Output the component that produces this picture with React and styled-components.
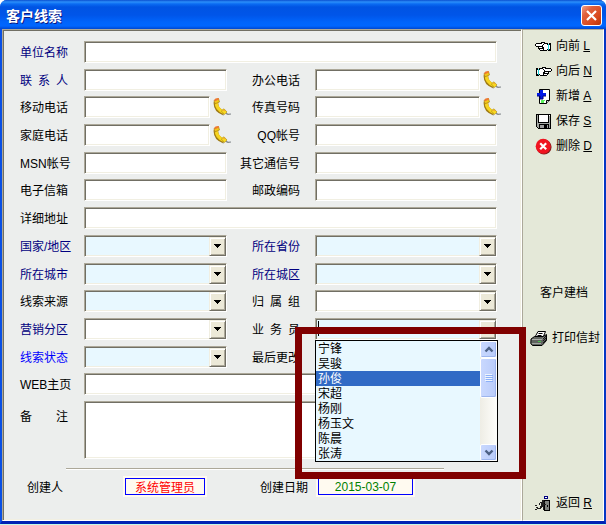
import React from 'react';
import styled, { createGlobalStyle, css } from 'styled-components';

const GlobalStyle = createGlobalStyle`
  * { box-sizing: border-box; }
  body {
    margin: 0;
    background: #fff;
    color: #000;
    font: 12px/15px "Liberation Sans", "Noto Sans CJK SC", sans-serif;
  }
  button, input, select, textarea { font: inherit; color: inherit; }
`;

const sunken = css`
  border: 1px solid;
  border-color: #aca899 #fff #fff #aca899;
  border-radius: 0;
  box-shadow: inset 1px 1px #716f64, inset -1px -1px #f1efe2;
`;

const Page = styled.div`
  display: flex;
  flex-direction: column;
  min-height: 100vh;
`;

const Desktop = styled.div`
  height: 1px;
  background: #c4fbe6;
`;

const Window = styled.main`
  flex: 1;
  display: flex;
  flex-direction: column;
  border: solid #0a50e4;
  border-width: 0 2px 3px;
  border-color: #0a50e4 #0636c4 #0022b4 #0a50e4;
  border-radius: 7px 7px 0 0;
  background: #0a50e4;
`;

const TitleBar = styled.header`
  display: flex;
  align-items: center;
  justify-content: space-between;
  height: 29px;
  margin: 0 -2px;
  padding: 2px 4px 0 6px;
  border-radius: 7px 7px 0 0;
  background: linear-gradient(
    #0a50d0 0, #2b8ffa 2px, #0a6bf2 4px, #0054e3 7px, #0055e9 15px,
    #0064fb 22px, #0066ff 26px, #0047cf 29px
  );
`;

const Title = styled.h1`
  margin: 0;
  color: #fff;
  font-size: 14px;
  line-height: 20px;
  font-weight: 700;
  text-shadow: 1px 1px #0a1883;
`;

const CloseButton = styled.button`
  display: grid;
  place-items: center;
  width: 21px;
  height: 21px;
  padding: 0;
  border: 1px solid #fff;
  border-radius: 3px;
  background: linear-gradient(135deg, #f0a088 0, #e0603c 30%, #d8481c 70%, #b83408 100%);
`;

const Body = styled.div`
  flex: 1;
  display: grid;
  grid-template-columns: minmax(0, 1fr) 82px;
`;

const Form = styled.form`
  ${sunken}
  padding: 11px 20px 20px 17px;
  background: #eceeed;
`;

const Fields = styled.div`
  display: grid;
  grid-template-columns: 64px minmax(0, 147fr) 84px minmax(0, 186fr);
  grid-template-rows: repeat(13, 1fr);
  min-height: 360px;
`;

const toneColor = { navy: '#000080', blue: '#0000ff', black: '#000' };

const Label = styled.label`
  justify-self: ${p => (p.$end ? 'end' : 'start')};
  width: ${p => (p.$spread ? '48px' : 'auto')};
  margin-right: ${p => (p.$end ? '15px' : '0')};
  color: ${p => toneColor[p.$tone || 'black']};
  line-height: 24px;
  white-space: nowrap;
  text-align-last: ${p => (p.$spread ? 'justify' : 'auto')};
`;

const Cell = styled.div`
  position: relative;
  display: flex;
  align-items: flex-start;
  gap: 3px;
  grid-column: ${p => (p.$wide ? 'span 3' : 'auto')};
  padding-right: ${p => (p.$phone ? '0' : '4px')};
`;

const TextBox = styled.input`
  ${sunken}
  flex: 1;
  min-width: 0;
  height: 22px;
  padding: 2px 4px;
  background: #fff;
  outline: none;
`;

const IconButton = styled.button`
  display: block;
  width: 18px;
  height: 20px;
  padding: 0;
  border: 0;
  background: none;
`;

const Combo = styled.div`
  ${sunken}
  position: relative;
  flex: 1;
  display: flex;
  min-width: 0;
  height: 22px;
  padding: 1px;
  background: ${p => (p.$plain ? '#fff' : '#e8f8ff')};
`;

const comboField = css`
  appearance: none;
  flex: 1;
  min-width: 0;
  padding: 0 20px 0 2px;
  border: 0;
  background: transparent;
  outline: none;
`;

const Select = styled.select`${comboField}`;
const ComboInput = styled.input`${comboField}`;

const ComboArrow = styled.span`
  position: absolute;
  top: 1px;
  right: 0;
  bottom: 0;
  display: grid;
  place-items: center;
  width: 17px;
  border: 1px solid;
  border-color: #f1efe2 #716f64 #716f64 #f1efe2;
  box-shadow: inset 1px 1px #fff, inset -1px -1px #aca899;
  background: #ece9d8;
  pointer-events: none;
`;

const Caret = styled.span`
  position: absolute;
  top: 2px;
  left: 2px;
  width: 1px;
  height: 15px;
  background: #000;
`;

const Highlight = styled.div`
  position: absolute;
  z-index: 3;
  top: 9px;
  left: -20px;
  right: -25px;
  height: 152px;
  border: 7px solid #800000;
  pointer-events: none;
`;

const Popup = styled.div`
  position: absolute;
  z-index: 2;
  top: 22px;
  left: 0;
  right: 3px;
  display: flex;
  border: 1px solid #000;
  background: #e8f8ff;
`;

const Options = styled.ul`
  flex: 1;
  margin: 0;
  padding: 0;
  list-style: none;
`;

const Option = styled.li`
  height: 15px;
  padding-left: 2px;
  line-height: 17px;
  color: ${p => (p.$selected ? '#fff' : '#000')};
  background: ${p => (p.$selected ? '#316ac5' : 'transparent')};
`;

const ScrollBar = styled.div`
  display: flex;
  flex-direction: column;
  width: 17px;
  background: linear-gradient(90deg, #eeede5, #fefefb);
`;

const scrollPart = css`
  display: grid;
  place-items: center;
  padding: 0;
  border: 1px solid #fff;
  border-radius: 2px;
  background: linear-gradient(90deg, #c9d8fe, #b9cbfa);
  box-shadow: inset -1px -1px #9db5ee;
`;

const ScrollButton = styled.button`
  ${scrollPart}
  height: 17px;
  margin-top: ${p => (p.$last ? 'auto' : '0')};
`;

const ScrollThumb = styled.div`
  ${scrollPart}
  height: 40px;
`;

const Notes = styled.div`
  display: grid;
  grid-template-columns: 64px minmax(0, 1fr);
  padding-right: 4px;

  label { margin-top: 4px; }
`;

const TextArea = styled.textarea`
  ${sunken}
  display: block;
  width: 100%;
  height: 58px;
  background: #fff;
  resize: none;
  outline: none;
`;

const Rule = styled.hr`
  height: 2px;
  margin: 9px 57px 6px 46px;
  border: 0;
  border-top: 1px solid #aca899;
  background: #fff;
`;

const Meta = styled.div`
  display: grid;
  grid-template-columns: 96px 84px 1fr 56px 99px;
  padding: 0 86px 0 7px;

  label:nth-of-type(2) { grid-column: 4; }
`;

const Stamp = styled.input`
  min-width: 0;
  height: 21px;
  padding: 0;
  border: 2px solid #fffaf0;
  background: #fffaf0;
  box-shadow: inset 0 0 0 1px #0000ff;
  color: ${p => p.$color};
  text-align: center;
  outline: none;
`;

const Sidebar = styled.nav`
  display: flex;
  flex-direction: column;
  padding: 4px 0;
  border: 1px solid;
  border-color: #aca899 #fff #fff #aca899;
  background: #e4e8d8;
`;

const Action = styled.button`
  display: flex;
  align-items: center;
  gap: 4px;
  height: 25px;
  margin-top: ${p => p.$before || '0'};
  padding: 0 0 0 ${p => p.$inset || '12px'};
  border: 0;
  background: none;
  white-space: nowrap;
`;

const palette = { '#': '#000', w: '#fff', c: '#20d8e0', g: '#808480' };

const PixelIcon = ({ rows, flip }) => {
  const width = rows[0].length;
  return (
    <svg
      width={width}
      height={rows.length}
      viewBox={`0 0 ${width} ${rows.length}`}
      shapeRendering="crispEdges"
      aria-hidden="true"
    >
      {rows.flatMap((row, y) =>
        [...row].map((key, x) =>
          palette[key] ? (
            <rect key={`${x}-${y}`} x={flip ? width - 1 - x : x} y={y} width="1" height="1" fill={palette[key]} />
          ) : null
        )
      )}
    </svg>
  );
};

const handRows = [
  '......####.......',
  '.######ww####.##.',
  '#wwwwwww#www#c##.',
  '#wwwwww#wwwwwcw#.',
  '.#######wwwwwcw#.',
  '...#www##wwwwcw#.',
  '...######wwwwcw#.',
  '....#www#www#c##.',
  '.....#######.###.',
];

const Phone = () => (
  <svg width="18" height="20" viewBox="0 0 18 20" aria-hidden="true">
    <path d="M3 9 C4 13 7 17 11 19" fill="none" stroke="#a0a4a4" strokeWidth="2" opacity=".5" />
    <path d="M3 6 C2.5 11 5 15 11 17" fill="none" stroke="#a07c14" strokeWidth="4.6" />
    <path d="M3.3 6 C3.2 11 6 14.5 11 16.5" fill="none" stroke="#f6d420" strokeWidth="3.2" />
    <path d="M1 4.5 L5.5 2.5 L6.5 6 L2 7.8Z" fill="#f2c818" stroke="#a88018" strokeWidth=".7" />
    <path d="M1.2 4 L2.5 2.4 L5.5 2 L6 3.6 L2 5.2Z" fill="#f07830" />
    <path d="M8.3 15 L11 12.8 L14 16 L11.5 18.4Z" fill="#f8dc20" stroke="#b89018" strokeWidth=".7" />
    <path d="M10 14.5 L11 13.4 L12.4 15.4Z" fill="#f89838" />
    <path d="M13 17.4 L15 18.4 L18 18" fill="none" stroke="#808488" strokeWidth="1.2" />
  </svg>
);

const NewPage = () => (
  <svg width="17" height="17" viewBox="0 0 17 17" aria-hidden="true">
    <path d="M4.5 1.5h10v11l-3 3h-7z" fill="#fff" stroke="#000" />
    <path d="M14.5 12.5h-3v3" fill="#d8d8d8" stroke="#000" />
    <path d="M5 2h3v3h3v3H8v3H5V8H2V5h3z" fill="#0018e8" />
    <path d="M2 8h3v3h3v-3h3" fill="none" stroke="#000080" />
    <path d="M6 12h4v1H6zM6 13h3v2H6z" fill="#5cf05c" />
  </svg>
);

const Floppy = () => (
  <svg width="17" height="17" viewBox="0 0 17 17" shapeRendering="crispEdges" aria-hidden="true">
    <path d="M1 1h15v15H3l-2-2z" fill="#000" />
    <path d="M2 2h13v13H3l-1-1z" fill="#a4a8a4" />
    <path d="M3 1h11v9H3z" fill="#000" />
    <path d="M4 2h9v7H4z" fill="#fff" />
    <path d="M4 11h10v5H4z" fill="#000" />
    <path d="M5 12h4v3H5zM12 12h1v3h-1z" fill="#a0a0a0" />
    <path d="M14 2h1v1h-1z" fill="#fff" />
  </svg>
);

const Delete = () => (
  <svg width="17" height="17" viewBox="0 0 17 17" aria-hidden="true">
    <circle cx="9" cy="9" r="7.6" fill="#802020" />
    <circle cx="8.2" cy="8.2" r="7.5" fill="#f01420" />
    <path d="M5.2 5.2l6 6m0-6l-6 6" stroke="#fff" strokeWidth="2.2" />
  </svg>
);

const Printer = () => (
  <svg width="18" height="17" viewBox="0 0 18 17" aria-hidden="true">
    <path d="M5 7 L8 1.5 H15.5 L13 7.5Z" fill="#fff" stroke="#000" />
    <path d="M8.5 3.5h4M7.5 5.5h4" stroke="#000" />
    <path d="M1 9 L4.5 6.5 H13 L16.5 4.5 V10.5 L12 15.5 H2.5 L.8 13.5Z" fill="#606460" stroke="#000" />
    <path d="M2 9.5h10l3-3" fill="none" stroke="#a8aca8" />
    <path d="M2 13.5h9" stroke="#a0a4a0" />
    <path d="M8 11.5h3" stroke="#48c848" />
    <path d="M13 9l3-3M13 11l3-3M13 13l3-3" stroke="#181818" />
  </svg>
);

const Exit = () => (
  <svg width="17" height="17" viewBox="0 0 17 17" shapeRendering="crispEdges" aria-hidden="true">
    <path d="M9 1h4v3H9z" fill="#000080" />
    <path d="M10 2h2v1h-2z" fill="#fff" />
    <path d="M9 5h6v11H9z" fill="#000" />
    <path d="M10 6h4v9h-4z" fill="#808480" />
    <path d="M12 10h1v2h-1z" fill="#000" />
    <path d="M7 5h2v2H7zM5 7h5v1H5zM4 8h1v2H4zM6 8h3v4H6zM9 9h2v1H9zM5 11h2v2H5zM2 13h4v1H2zM8 12h1v3H8zM0 10h2v1H0zM1 12h2v1H1zM0 14h2v1H0z" fill="#202020" />
  </svg>
);

const Chevron = ({ down }) => (
  <svg width="10" height="7" viewBox="0 0 10 7" aria-hidden="true">
    <path d={down ? 'M1.5 1.5L5 5L8.5 1.5' : 'M1.5 5.5L5 2L8.5 5.5'} fill="none" stroke="#4d6185" strokeWidth="2.4" />
  </svg>
);

const Arrow = () => (
  <svg width="7" height="4" viewBox="0 0 7 4" shapeRendering="crispEdges" aria-hidden="true">
    <path d="M0 0h7v1h-1v1h-1v1h-1v1h-1v-1h-1v-1h-1v-1h-1z" fill="#000" />
  </svg>
);

const fields = [
  { id: 'company', label: '单位名称', tone: 'navy', wide: true },
  { id: 'contact', label: '联 系 人', tone: 'navy', spread: true },
  { id: 'office', label: '办公电话', end: true, phone: true },
  { id: 'mobile', label: '移动电话', phone: true },
  { id: 'fax', label: '传真号码', end: true, phone: true },
  { id: 'home', label: '家庭电话', phone: true },
  { id: 'qq', label: 'QQ帐号', end: true },
  { id: 'msn', label: 'MSN帐号' },
  { id: 'im', label: '其它通信号', end: true },
  { id: 'email', label: '电子信箱' },
  { id: 'zip', label: '邮政编码', end: true },
  { id: 'address', label: '详细地址', wide: true },
  { id: 'country', label: '国家/地区', tone: 'navy', combo: true },
  { id: 'province', label: '所在省份', tone: 'navy', end: true, combo: true },
  { id: 'city', label: '所在城市', tone: 'navy', combo: true },
  { id: 'district', label: '所在城区', tone: 'navy', end: true, combo: true },
  { id: 'source', label: '线索来源', combo: true },
  { id: 'group', label: '归 属 组', end: true, spread: true, combo: true, plain: true },
  { id: 'region', label: '营销分区', tone: 'navy', combo: true, plain: true },
  { id: 'sales', label: '业 务 员', end: true, spread: true, open: true },
  { id: 'status', label: '线索状态', tone: 'blue', combo: true },
  { id: 'updated', label: '最后更改', end: true },
  { id: 'web', label: 'WEB主页', wide: true },
];

const people = ['宁锋', '吴骏', '孙俊', '宋超', '杨刚', '杨玉文', '陈晨', '张涛'];

function SalesCombo({ id }) {
  return (
    <>
      <Combo>
        <ComboInput id={id} role="combobox" aria-expanded="true" aria-controls="sales-list" />
        <Caret />
        <ComboArrow />
      </Combo>
      <Popup>
        <Options id="sales-list" role="listbox" aria-label="业务员">
          {people.map(name => (
            <Option key={name} role="option" aria-selected={name === '孙俊'} $selected={name === '孙俊'}>
              {name}
            </Option>
          ))}
        </Options>
        <ScrollBar>
          <ScrollButton type="button" aria-label="向上滚动"><Chevron /></ScrollButton>
          <ScrollThumb>
            <svg width="8" height="8" viewBox="0 0 8 8" shapeRendering="crispEdges" aria-hidden="true">
              <path d="M0 0h7v1H0zM0 2h7v1H0zM0 4h7v1H0zM0 6h7v1H0z" fill="#eef4fe" />
              <path d="M1 1h7v1H1zM1 3h7v1H1zM1 5h7v1H1zM1 7h7v1H1z" fill="#8cb0f8" />
            </svg>
          </ScrollThumb>
          <ScrollButton type="button" aria-label="向下滚动" $last><Chevron down /></ScrollButton>
        </ScrollBar>
      </Popup>
      <Highlight />
    </>
  );
}

function Field({ id, label, tone, wide, spread, end, phone, combo, plain, open }) {
  return (
    <>
      <Label htmlFor={id} $tone={tone} $end={end} $spread={spread}>{label}</Label>
      <Cell $wide={wide} $phone={phone}>
        {open && <SalesCombo id={id} />}
        {combo && (
          <Combo $plain={plain}>
            <Select id={id} defaultValue=""><option value="" /></Select>
            <ComboArrow><Arrow /></ComboArrow>
          </Combo>
        )}
        {!open && !combo && <TextBox id={id} type="text" />}
        {phone && <IconButton type="button" aria-label={`拨打${label}`}><Phone /></IconButton>}
      </Cell>
    </>
  );
}

export default function App() {
  return (
    <Page>
      <GlobalStyle />
      <Window>
        <TitleBar>
          <Title>客户线索</Title>
          <CloseButton type="button" aria-label="关闭">
            <svg width="13" height="13" viewBox="0 0 13 13" aria-hidden="true">
              <path d="M2 2l9 9m0-9l-9 9" stroke="#fff" strokeWidth="2.2" />
            </svg>
          </CloseButton>
        </TitleBar>
        <Body>
          <Form>
            <Fields>
              {fields.map(field => <Field key={field.id} {...field} />)}
            </Fields>
            <Notes>
              <Label htmlFor="notes" $spread>备 注</Label>
              <TextArea id="notes" />
            </Notes>
            <Rule />
            <Meta>
              <Label htmlFor="creator">创建人</Label>
              <Stamp id="creator" readOnly value="系统管理员" $color="#ff0000" />
              <Label htmlFor="created">创建日期</Label>
              <Stamp id="created" readOnly value="2015-03-07" $color="#008000" />
            </Meta>
          </Form>
          <Sidebar>
            <Action type="button"><PixelIcon rows={handRows} /><span>向前 <u>L</u></span></Action>
            <Action type="button"><PixelIcon rows={handRows} flip /><span>向后 <u>N</u></span></Action>
            <Action type="button"><NewPage /><span>新增 <u>A</u></span></Action>
            <Action type="button"><Floppy /><span>保存 <u>S</u></span></Action>
            <Action type="button"><Delete /><span>删除 <u>D</u></span></Action>
            <Action type="button" $before="122px" $inset="17px">客户建档</Action>
            <Action type="button" $before="20px" $inset="7px"><Printer />打印信封</Action>
            <Action type="button" $before="auto"><Exit /><span>返回 <u>R</u></span></Action>
          </Sidebar>
        </Body>
      </Window>
      <Desktop />
    </Page>
  );
}
